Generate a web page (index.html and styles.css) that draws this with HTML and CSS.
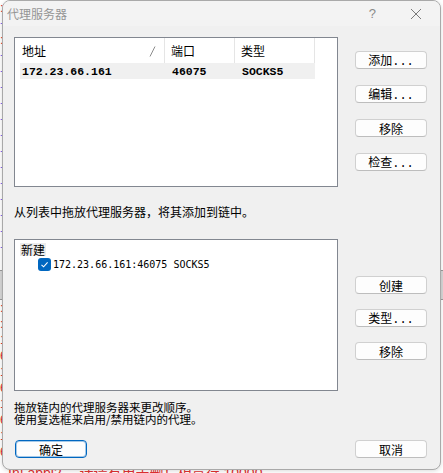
FILE: index.html
```html
<!DOCTYPE html>
<html lang="zh-CN">

<head>
    <meta charset="UTF-8">
    <meta name="viewport" content="width=device-width, initial-scale=1.0">
    <title>代理服务器</title>
    <link rel="stylesheet" href="styles.css">
</head>

<body>
    <!-- 背后的编辑器窗口，只露出边缘 -->
    <div class="backdrop">
        <p class="line red">: item</p>
        <p class="line blue">+ proxy</p>
        <p class="line red">: item</p>
        <p class="line blue">+ proxy</p>
        <p class="line blue">+ proxy</p>
        <p class="line blue">+ proxy</p>
        <p class="line blue">+ proxy</p>
        <p class="line blue">+ proxy</p>
        <p class="line blue">+ proxy</p>
        <p class="line blue">+ proxy</p>
        <p class="line blue">+ proxy</p>
        <p class="line blue">+ proxy</p>
        <p class="line blue">+ proxy</p>
        <p class="line blue">+ proxy</p>
        <p class="line blue">+ proxy</p>
        <p class="line blue">+ proxy</p>
        <div class="gray-bar"></div>
        <p class="line red">: item</p>
        <p class="line red">: item</p>
        <p class="line red">1 item</p>
        <p class="line red">6 item</p>
        <p class="line red">1 item</p>
        <p class="line red">6 item</p>
        <p class="line red">1 item</p>
        <p class="line red">6 item</p>
        <p class="line red">1 item</p>
        <p class="line red">6 item</p>
        <p class="bottom-text">In! appl2 二计请有用击删！相意行 10000</p>
    </div>

    <div class="dialog">
        <div class="titlebar">
            <span class="title">代理服务器</span>
            <span class="help">?</span>
            <svg class="close" width="12" height="12" viewBox="0 0 12 12">
                <path d="M1 1 L11 11 M11 1 L1 11" stroke="#7a7a7a" stroke-width="1" fill="none" />
            </svg>
        </div>

        <div class="content">
            <div class="section">
                <div class="listbox proxy-list">
                    <div class="list-head">
                        <div class="col col-addr">地址
                            <svg class="sort" width="7" height="11" viewBox="0 0 7 11">
                                <path d="M6 0.5 L1 10.5" stroke="#8c8c8c" stroke-width="1" fill="none" />
                            </svg>
                        </div>
                        <div class="col col-port">端口</div>
                        <div class="col col-type">类型</div>
                        <div class="col col-fill"></div>
                    </div>
                    <div class="list-row">
                        <div class="col col-addr">172.23.66.161</div>
                        <div class="col col-port">46075</div>
                        <div class="col col-type">SOCKS5</div>
                    </div>
                </div>
                <div class="buttons top-buttons">
                    <button class="btn">添加<span class="dots">...</span></button>
                    <button class="btn">编辑<span class="dots">...</span></button>
                    <button class="btn">移除</button>
                    <button class="btn">检查<span class="dots">...</span></button>
                </div>
            </div>

            <p class="hint">从列表中拖放代理服务器，将其添加到链中。</p>

            <div class="section">
                <div class="listbox chain-list">
                    <div class="chain-name">新建</div>
                    <div class="chain-item">
                        <span class="check">
                            <svg width="13" height="13" viewBox="0 0 13 13">
                                <path d="M3.5 6.8 L5.6 8.8 L9.6 4.4" stroke="#fff" stroke-width="1.1" fill="none" />
                            </svg>
                        </span>
                        <span class="chain-text">172.23.66.161:46075 SOCKS5</span>
                    </div>
                </div>
                <div class="buttons chain-buttons">
                    <button class="btn">创建</button>
                    <button class="btn">类型<span class="dots">...</span></button>
                    <button class="btn">移除</button>
                </div>
            </div>

            <div class="note">
                <div class="note-line">拖放链内的代理服务器来更改顺序。</div>
                <div class="note-line">使用复选框来启用/禁用链内的代理。</div>
            </div>

            <div class="footer">
                <button class="btn btn-default">确定</button>
                <button class="btn">取消</button>
            </div>
        </div>
    </div>
</body>

</html>
```

FILE: styles.css
```css
* {
    box-sizing: border-box;
}

body {
    margin: 0;
    width: 443px;
    height: 473px;
    overflow: hidden;
    background: #ffffff;
    font-family: "Noto Sans CJK SC", "Noto Sans", sans-serif;
    font-size: 12px;
    color: #000;
    position: relative;
}

/* 背景窗口 */
.backdrop {
    position: absolute;
    top: 0;
    left: 0;
    right: 0;
    bottom: 0;
    font-family: "Liberation Sans", "Noto Sans CJK SC", sans-serif;
    font-size: 13px;
    line-height: 16px;
}

.line {
    margin: 0;
    height: 16px;
    white-space: nowrap;
}

.line.blue {
    color: #7a6cf0;
}

.line.red {
    color: #e23030;
}

.gray-bar {
    height: 30px;
    margin: 14px 0 0;
    background: #d6d6d6;
    border-top: 1px solid #9a9a9a;
    border-bottom: 1px solid #9a9a9a;
}

.bottom-text {
    margin: 5px 0 0;
    padding-left: 8px;
    color: #e23030;
    font-size: 14px;
    line-height: 16px;
    white-space: nowrap;
}

/* 对话框 */
.dialog {
    position: absolute;
    left: 2px;
    top: 0;
    width: 439px;
    height: 470px;
    background: #f0f0f0;
    border: 1px solid #a9a9a9;
    border-radius: 8px;
    box-shadow: 0 1px 4px rgba(0, 0, 0, 0.15);
    overflow: hidden;
}

.titlebar {
    height: 25px;
    display: flex;
    align-items: center;
    padding-left: 4px;
    background: #f3f3f3;
}

.title {
    color: #959595;
    font-size: 12px;
    flex: 1;
}

.help {
    color: #8a8a8a;
    font-family: "Liberation Sans", sans-serif;
    font-size: 13px;
    margin-right: 34px;
}

.close {
    margin-right: 18px;
}

.content {
    padding: 0 13px 0 11px;
}

.section {
    display: flex;
    gap: 17px;
    margin-top: 11px;
}

.listbox {
    width: 324px;
    background: #fff;
    border: 1px solid #828790;
}

.proxy-list {
    height: 150px;
    padding-left: 5px;
}

.list-head {
    display: flex;
    height: 25px;
    align-items: stretch;
}

.list-head .col {
    display: flex;
    align-items: center;
    border-right: 1px solid #e5e5e5;
    position: relative;
}

.list-head .col-fill {
    flex: 1;
    border-right: none;
}

.col-addr {
    width: 145px;
    padding-left: 2px;
}

.col-port {
    width: 70px;
    padding-left: 6px;
}

.col-type {
    width: 80px;
    padding-left: 6px;
}

.sort {
    position: absolute;
    left: 129px;
    top: 8px;
}

.list-row {
    display: flex;
    height: 16px;
    width: 295px;
    align-items: center;
    background: #f0f0f0;
    font-family: "Liberation Mono", monospace;
    font-weight: bold;
    font-size: 11.5px;
}

.list-row .col-port,
.list-row .col-type {
    padding-left: 7px;
}

.buttons {
    display: flex;
    flex-direction: column;
    width: 72px;
}

.top-buttons {
    padding-top: 14px;
    gap: 16px;
}

.chain-buttons {
    padding-top: 37px;
    gap: 15px;
}

.btn {
    height: 18px;
    width: 72px;
    padding: 0;
    background: #fdfdfd;
    border: 1px solid #d0d0d0;
    border-bottom-color: #bdbdbd;
    border-radius: 4px;
    font-family: "Noto Sans CJK SC", sans-serif;
    font-size: 12px;
    line-height: 15px;
    color: #000;
}

.dots {
    font-family: "Liberation Mono", monospace;
    letter-spacing: 0;
}

.btn-default {
    border: 1px solid #0067c0;
    box-shadow: inset 0 0 0 1px rgba(0, 103, 192, 0.35);
}

.hint {
    margin: 18px 0 0 0;
    line-height: 14px;
}

.hint + .section {
    margin-top: 20px;
}

.chain-list {
    height: 152px;
    padding: 1px 0 0 5px;
}

.chain-name {
    display: inline-block;
    background: #ececec;
    line-height: 13px;
    padding: 0 1px;
}

.chain-item {
    display: flex;
    align-items: center;
    height: 13px;
    padding-left: 18px;
    gap: 2px;
}

.check {
    width: 13px;
    height: 13px;
    border-radius: 3px;
    background: #0067c0;
    display: flex;
}

.chain-text {
    font-family: "DejaVu Sans Mono", monospace;
    font-size: 10px;
    line-height: 13px;
}

.note {
    margin-top: 10px;
    font-size: 11.5px;
}

.note-line {
    height: 12px;
    line-height: 12px;
}

.footer {
    display: flex;
    justify-content: space-between;
    margin-top: 15px;
    padding-left: 1px;
}
```
